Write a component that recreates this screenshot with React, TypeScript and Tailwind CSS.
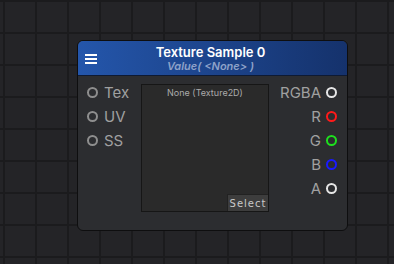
const inputs = ["Tex", "UV", "SS"];

const outputs = [
  { label: "RGBA", color: "border-[#e6e6e6]" },
  { label: "R", color: "border-[#ff1a1a]" },
  { label: "G", color: "border-[#1ee01e]" },
  { label: "B", color: "border-[#1a1aff]" },
  { label: "A", color: "border-[#e6e6e6]" },
];

function Port({ color }: { color: string }) {
  return <span className={`block w-[11px] h-[11px] rounded-full border-2 ${color}`} />;
}

export default function App() {
  return (
    <div className="relative w-full h-[264px] overflow-hidden bg-[#242427] bg-[linear-gradient(to_right,#1b1b1d_2px,transparent_2px),linear-gradient(to_bottom,#1b1b1d_2px,transparent_2px)] bg-[size:32px_32px] bg-[position:3px_0px]">
      <div
        className="absolute left-[77px] top-[40px] w-[271px] h-[191px] rounded-[6px] border border-[#0e0e0f] bg-[#2c2d30] overflow-hidden"
        style={{ fontFamily: "Inter, 'Liberation Sans', sans-serif" }}
      >
        {/* header */}
        <div className="relative h-[35px] pr-[4px] bg-[linear-gradient(to_right,#2456ab,#15326c)] border-b border-[#0e1a33] flex flex-col items-center justify-center">
          <div className="absolute left-[7px] top-[13px] flex flex-col gap-[2px]">
            <span className="block w-[12px] h-[2px] bg-white" />
            <span className="block w-[12px] h-[2px] bg-white" />
            <span className="block w-[12px] h-[2px] bg-white" />
          </div>
          <div className="text-white text-[13px] font-semibold leading-[15px] mt-[1px]">Texture Sample 0</div>
          <div className="text-[#8ea2c9] text-[11px] font-semibold italic leading-[13px]">Value( &lt;None&gt; )</div>
        </div>

        {/* body */}
        <div className="flex">
          <div className="w-[63px] pt-[4px] pl-[9px] flex flex-col">
            {inputs.map((l) => (
              <div key={l} className="h-[24px] flex items-center gap-[6px]">
                <Port color="border-[#8e8e8e]" />
                <span className="text-[15px] text-[#a0a0a0] leading-none">{l}</span>
              </div>
            ))}
          </div>

          <div className="relative mt-[8px] w-[128px] h-[128px] bg-[#2a2a2a] border border-[#161616]">
            <div className="text-center text-[9px] text-[#ababab] mt-[2px] leading-[12px]">None (Texture2D)</div>
            <div
              className="absolute right-0 bottom-0 w-[41px] h-[17px] bg-[#3d3d3d] border-l border-t border-[#222] text-[10px] text-[#c9c9c9] tracking-[1px] flex items-center justify-center"
              style={{ fontFamily: "'DejaVu Sans', sans-serif" }}
            >
              Select
            </div>
          </div>

          <div className="flex-1 pt-[4px] pr-[10px] flex flex-col items-end">
            {outputs.map((o) => (
              <div key={o.label} className="h-[24px] flex items-center gap-[5px]">
                <span className="text-[15px] text-[#a0a0a0] leading-none">{o.label}</span>
                <Port color={o.color} />
              </div>
            ))}
          </div>
        </div>
      </div>
    </div>
  );
}
